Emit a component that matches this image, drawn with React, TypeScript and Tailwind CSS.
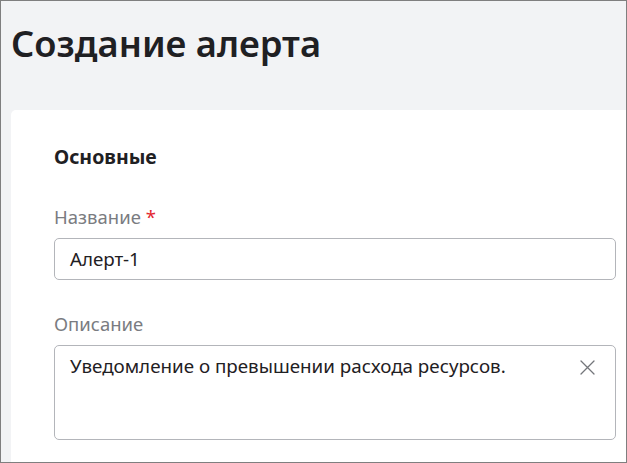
import React from "react";

export default function App() {
    return (
        <div className="w-[627px] h-[463px] overflow-hidden border border-[#7f7f7f] bg-[#f2f3f5] font-['Noto_Sans',sans-serif] text-[#1f2023]">
            <div className="pl-[10px]">
                <h1 className="pt-[18px] text-[36.3px] font-semibold leading-[48px]">Создание алерта</h1>
                <div className="mt-[43px] w-[640px] rounded-[5px] bg-white pl-[43px] pt-[35px] pb-10">
                    <h2 className="text-[19.5px] font-bold leading-[24px]">Основные</h2>

                    {/* Название */}
                    <div className="mt-[36px]">
                        <label className="block text-[18.5px] leading-[24px] text-[#7a7c81]">
                            Название <span className="text-[#e3262f]">*</span>
                        </label>
                        <div className="mt-[9px] flex h-[42px] w-[562px] items-center rounded-[5px] border border-[#b3b5ba] px-[15px] text-[18.8px] leading-[24px]">
                            Алерт-1
                        </div>
                    </div>

                    {/* Описание */}
                    <div className="mt-[32px]">
                        <label className="block text-[18.5px] leading-[24px] text-[#7a7c81]">Описание</label>
                        <div className="mt-[9px] flex h-[95px] w-[562px] items-start justify-between rounded-[5px] border border-[#b3b5ba] pl-[15px] pr-[20px] pt-[8px] text-[18.8px] leading-[24px]">
                            <span>Уведомление о превышении расхода ресурсов.</span>
                            <svg className="mt-[6px] shrink-0" width="15" height="15" viewBox="0 0 15 15" fill="none">
                                <path d="M1 1L14 14M14 1L1 14" stroke="#74767b" strokeWidth="1.3" strokeLinecap="round" />
                            </svg>
                        </div>
                    </div>
                </div>
            </div>
        </div>
    );
}
